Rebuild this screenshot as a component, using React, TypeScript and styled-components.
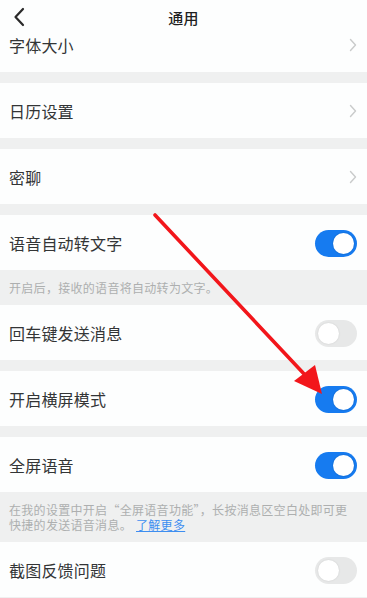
import React, { useLayoutEffect, useRef } from "react";
import styled, { createGlobalStyle } from "styled-components";

const GlobalStyle = createGlobalStyle`
  html, body {
    margin: 0;
    padding: 0;
    background: #fdfefe;
    overflow: hidden;
  }
  body {
    font-family: "Noto Sans CJK SC", "Noto Sans", sans-serif;
    -webkit-font-smoothing: antialiased;
  }
`;

type Item =
  | { kind: "link"; label: string }
  | { kind: "switch"; label: string; on: boolean }
  | { kind: "gap" }
  | { kind: "note"; text: string; more?: string };

const items: Item[] = [
  { kind: "link", label: "字体大小" },
  { kind: "gap" },
  { kind: "link", label: "日历设置" },
  { kind: "gap" },
  { kind: "link", label: "密聊" },
  { kind: "gap" },
  { kind: "switch", label: "语音自动转文字", on: true },
  { kind: "note", text: "开启后，接收的语音将自动转为文字。" },
  { kind: "switch", label: "回车键发送消息", on: false },
  { kind: "gap" },
  { kind: "switch", label: "开启横屏模式", on: true },
  { kind: "gap" },
  { kind: "switch", label: "全屏语音", on: true },
  {
    kind: "note",
    text: "在我的设置中开启“全屏语音功能”，长按消息区空白处即可更快捷的发送语音消息。",
    more: "了解更多",
  },
  { kind: "switch", label: "截图反馈问题", on: false },
  { kind: "gap" },
];

const App = () => {
  const listRef = useRef<HTMLDivElement>(null);

  // the list is scrolled a bit, the first row hides under the header
  useLayoutEffect(() => {
    if (listRef.current) listRef.current.scrollTop = 21;
  }, []);

  return (
    <Screen>
      <GlobalStyle />
      <Header>
        <BackButton aria-label="返回">
          <svg width="12" height="20" viewBox="0 0 12 20">
            <path
              d="M10 2 L2.5 10 L10 18"
              fill="none"
              stroke="#2a2a2a"
              strokeWidth="2.2"
              strokeLinecap="round"
              strokeLinejoin="round"
            />
          </svg>
        </BackButton>
        <Title>通用</Title>
      </Header>

      <List ref={listRef}>
        {items.map((item, i) => {
          if (item.kind === "gap") return <Gap key={i} />;
          if (item.kind === "note")
            return (
              <Note key={i}>
                {item.text}
                {item.more && <More>{item.more}</More>}
              </Note>
            );
          return (
            <Row key={i}>
              <Label>{item.label}</Label>
              {item.kind === "link" ? (
                <svg width="8" height="14" viewBox="0 0 8 14">
                  <path
                    d="M1.5 1.5 L6.5 7 L1.5 12.5"
                    fill="none"
                    stroke="#c9cbcb"
                    strokeWidth="1.4"
                    strokeLinecap="round"
                    strokeLinejoin="round"
                  />
                </svg>
              ) : (
                <Switch $on={item.on}>
                  <Knob $on={item.on} />
                </Switch>
              )}
            </Row>
          );
        })}
      </List>

      <Overlay width="367" height="598" viewBox="0 0 367 598">
        <line
          x1="155"
          y1="215"
          x2="306"
          y2="376"
          stroke="#f2161b"
          strokeWidth="3.6"
          strokeLinecap="round"
        />
        <polygon points="294,381 315,365 322,394" fill="#f2161b" />
      </Overlay>
    </Screen>
  );
};

const Screen = styled.div`
  position: relative;
  width: 367px;
  height: 598px;
  display: flex;
  flex-direction: column;
  background: #fdfefe;
  overflow: hidden;
`;

const Header = styled.header`
  position: relative;
  flex: 0 0 38px;
  display: flex;
  align-items: center;
  justify-content: center;
  padding-bottom: 4px;
  box-sizing: border-box;
  background: #fdfefe;
  z-index: 1;
`;

const BackButton = styled.button`
  position: absolute;
  left: 13px;
  top: 7px;
  display: flex;
  padding: 0;
  border: 0;
  background: transparent;
`;

const Title = styled.h1`
  margin: 0;
  font-size: 15px;
  font-weight: 500;
  color: #1f1f1f;
  letter-spacing: 0.3px;
`;

const List = styled.div`
  flex: 1 1 auto;
  min-height: 0;
  overflow: hidden;
  display: flex;
  flex-direction: column;
`;

const Row = styled.div`
  flex: 0 0 55px;
  display: flex;
  align-items: center;
  justify-content: space-between;
  padding: 1px 10px 0 9px;
  box-sizing: border-box;
  background: #fdfefe;
`;

const Label = styled.span`
  font-size: 16px;
  color: #333536;
  letter-spacing: 0.2px;
`;

const Gap = styled.div`
  flex: 0 0 11px;
  background: #eff0f0;
`;

const Note = styled.p`
  margin: 0;
  padding: 10px 14px 10px 9px;
  background: #eff0f0;
  font-size: 12px;
  line-height: 15px;
  letter-spacing: 0.3px;
  color: #adafaf;
  flex: 0 0 auto;
`;

const More = styled.a`
  margin-left: 4px;
  color: #3d8ef0;
  text-decoration: underline;
`;

const Switch = styled.span<{ $on: boolean }>`
  display: flex;
  align-items: center;
  justify-content: ${({ $on }) => ($on ? "flex-end" : "flex-start")};
  width: 42px;
  height: 27px;
  padding: 0 3px;
  box-sizing: border-box;
  border-radius: 14px;
  background: ${({ $on }) => ($on ? "#167bf0" : "#e7e8e8")};
`;

const Knob = styled.span<{ $on: boolean }>`
  width: 21px;
  height: 21px;
  border-radius: 50%;
  background: #ffffff;
  box-shadow: ${({ $on }) =>
    $on ? "0 0 0 1px rgba(0,0,0,0.06)" : "0 0 2px rgba(0,0,0,0.12)"};
`;

const Overlay = styled.svg`
  position: absolute;
  left: 0;
  top: 0;
  pointer-events: none;
  z-index: 2;
`;

export default App;
